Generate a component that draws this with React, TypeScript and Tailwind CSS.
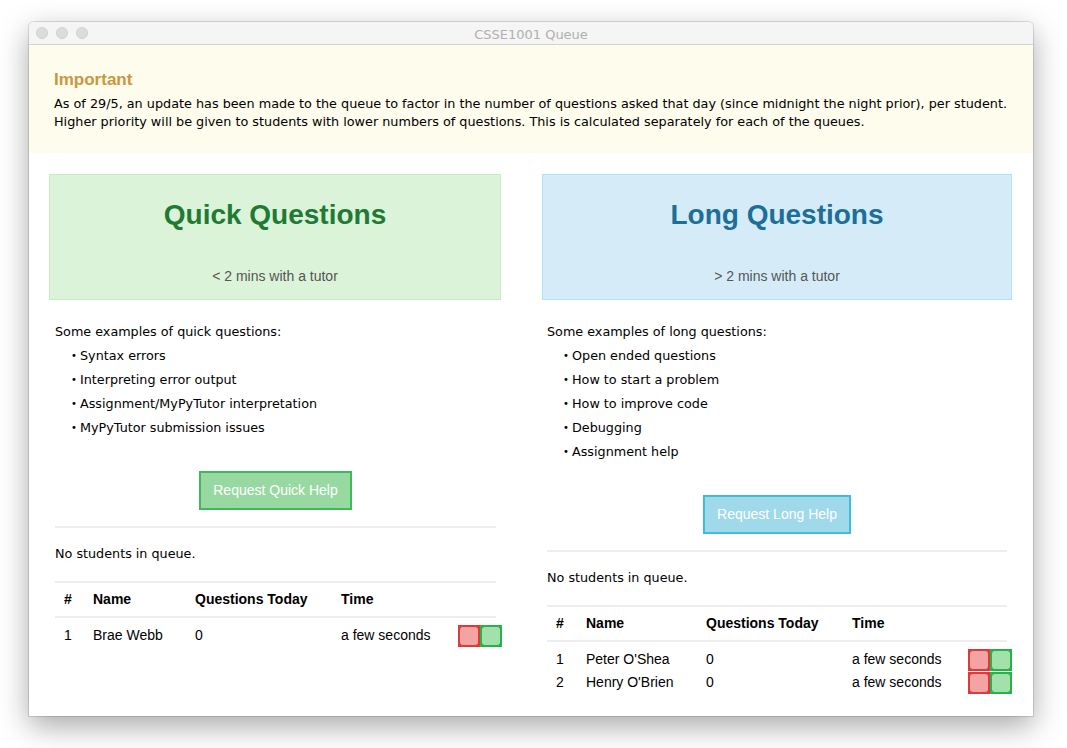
const lucida = { fontFamily: '"DejaVu Sans", sans-serif' };

interface Student {
  name: string;
  today: number;
  time: string;
}

interface QueueProps {
  title: string;
  subtitle: string;
  intro: string;
  examples: string[];
  button: string;
  students: Student[];
  panel: string;
  heading: string;
  btn: string;
  cols: string;
  pad: string;
}

function ActionButtons() {
  return (
    <div className="flex">
      <div className="w-[22px] h-[22px] bg-[#dd3b3b] p-[2px]">
        <div className="w-full h-full rounded-[3px] bg-[#f4a3a3]" />
      </div>
      <div className="w-[22px] h-[22px] bg-[#27b34a] p-[2px]">
        <div className="w-full h-full rounded-[3px] bg-[#a3e1aa]" />
      </div>
    </div>
  );
}

function Queue({ title, subtitle, intro, examples, button, students, panel, heading, btn, cols, pad }: QueueProps) {
  return (
    <div className="flex flex-col">
      <div className={`h-[126px] border flex flex-col items-center pt-[24px] ${panel}`}>
        <h2 className={`text-[28px] leading-[32px] font-bold ${heading}`}>{title}</h2>
        <p className="mt-auto mb-[14px] text-[14px] leading-[18px] text-[#555]">{subtitle}</p>
      </div>

      <div className={pad}>
        <div className="mt-[20px] text-[12.75px] leading-[24px] text-black" style={lucida}>
          <p>{intro}</p>
          <ul>
            {examples.map((e) => (
              <li key={e} className="flex pl-[16px]">
                <span className="w-[9px] text-[10px]">•</span>
                <span>{e}</span>
              </li>
            ))}
          </ul>
        </div>

        <div className="flex justify-center mt-[31px]">
          <button className={`h-[39px] px-[12px] border-2 text-white text-[14px] ${btn}`}>{button}</button>
        </div>

        <div className="mt-[16px] h-[2px] bg-[#eeeeee]" />
        <p className="mt-[17px] text-[12.75px] leading-[18px] text-black" style={lucida}>
          No students in queue.
        </p>

        <div className="mt-[18px] border-t-2 border-b-2 border-[#eeeeee]">
          <div className={`grid ${cols} h-[33px] items-center text-[14px] font-bold text-black`}>
            <div className="pl-[9px]">#</div>
            <div className="pl-[8px]">Name</div>
            <div className="pl-[8px]">Questions Today</div>
            <div className="pl-[8px]">Time</div>
            <div />
          </div>
        </div>
        <div className="pt-[6px]">
          {students.map((s, i) => (
            <div key={s.name} className={`grid ${cols} h-[23px] items-center text-[14px] text-black`}>
              <div className="pl-[9px]">{i + 1}</div>
              <div className="pl-[8px]">{s.name}</div>
              <div className="pl-[8px]">{s.today}</div>
              <div className="pl-[8px]">{s.time}</div>
              <div className="pl-[8px]">
                <ActionButtons />
              </div>
            </div>
          ))}
        </div>
      </div>
    </div>
  );
}

export default function App() {
  return (
    <div
      className="w-[1067px] h-[748px] bg-white pt-[22px] pl-[29px] overflow-hidden"
      style={{ fontFamily: '"Liberation Sans", Arial, sans-serif' }}
    >
      <div className="w-[1004px] h-[694px] bg-white rounded-t-[5px] overflow-hidden shadow-[0_10px_30px_rgba(0,0,0,0.35),0_0_0_1px_rgba(0,0,0,0.12)] flex flex-col">
        {/* title bar */}
        <div className="relative h-[23px] bg-[#f5f5f5] border-b border-[#d3d3d3] flex items-center justify-center pt-[3px] shrink-0">
          <div className="absolute left-[7px] top-[5px] flex gap-[8px]">
            <span className="w-[12px] h-[12px] rounded-full bg-[#dcdcdc] border border-[#d0d0d0]" />
            <span className="w-[12px] h-[12px] rounded-full bg-[#dcdcdc] border border-[#d0d0d0]" />
            <span className="w-[12px] h-[12px] rounded-full bg-[#dcdcdc] border border-[#d0d0d0]" />
          </div>
          <span className="text-[13px] text-[#b0b0b0]" style={lucida}>
            CSSE1001 Queue
          </span>
        </div>

        {/* notice */}
        <div className="bg-[#fefcec] pt-[25px] pb-[22px] px-[25px] shrink-0">
          <h3 className="text-[17px] leading-[20px] font-bold text-[#c9973e]">Important</h3>
          <p className="mt-[5px] text-[12.8px] leading-[18px] text-black" style={lucida}>
            As of 29/5, an update has been made to the queue to factor in the number of questions asked that day (since
            midnight the night prior), per student. Higher priority will be given to students with lower numbers of
            questions. This is calculated separately for each of the queues.
          </p>
        </div>

        {/* queues */}
        <div className="flex gap-[41px] pl-[20px] pt-[21px]">
          <div className="w-[452px]">
            <Queue
              title="Quick Questions"
              subtitle="< 2 mins with a tutor"
              intro="Some examples of quick questions:"
              examples={["Syntax errors", "Interpreting error output", "Assignment/MyPyTutor interpretation", "MyPyTutor submission issues"]}
              button="Request Quick Help"
              students={[{ name: "Brae Webb", today: 0, time: "a few seconds" }]}
              panel="bg-[#dbf3d8] border-[#c8ebc4]"
              heading="text-[#1e7a34]"
              btn="bg-[#98d9a1] border-[#3dba5a]"
              cols="grid-cols-[30px_102px_146px_117px_1fr]"
              pad="pl-[6px] pr-[5px]"
            />
          </div>
          <div className="w-[470px]">
            <Queue
              title="Long Questions"
              subtitle="> 2 mins with a tutor"
              intro="Some examples of long questions:"
              examples={["Open ended questions", "How to start a problem", "How to improve code", "Debugging", "Assignment help"]}
              button="Request Long Help"
              students={[
                { name: "Peter O'Shea", today: 0, time: "a few seconds" },
                { name: "Henry O'Brien", today: 0, time: "a few seconds" },
              ]}
              panel="bg-[#d5ecf8] border-[#ade5f3]"
              heading="text-[#1c6f98]"
              btn="bg-[#9fd9ea] border-[#3cbfdc]"
              cols="grid-cols-[31px_120px_146px_116px_1fr]"
              pad="px-[5px]"
            />
          </div>
        </div>
      </div>
    </div>
  );
}
